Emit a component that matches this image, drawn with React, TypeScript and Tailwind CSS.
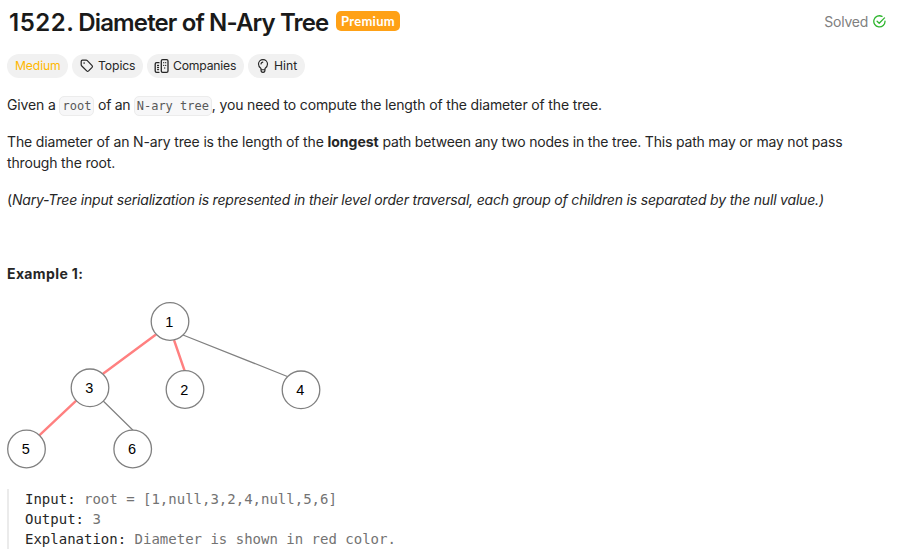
import type { ReactNode } from "react";

function Pill({ children, className }: { children: ReactNode; className: string }) {
  return (
    <div className={`flex h-6 shrink-0 items-center whitespace-nowrap rounded-full bg-[#f1f1f1] text-[12.2px] leading-4 ${className}`}>
      {children}
    </div>
  );
}

function Code({ children, className }: { children: ReactNode; className: string }) {
  return (
    <code className={`inline-block h-5 whitespace-pre rounded-[5px] border border-[#ececec] bg-[#f7f7f8] text-center align-middle font-['DejaVu_Sans_Mono',monospace] text-[12px] leading-[18px] tracking-normal text-[#595959] ${className}`}>
      {children}
    </code>
  );
}

function TagIcon() {
  return (
    <svg className="h-[14px] w-[14px]" viewBox="0 0 14 14" fill="none" stroke="currentColor" strokeWidth="1.2" strokeLinejoin="round">
      <path d="M1.2 2.4Q1.2 1.2 2.4 1.2H6.1Q6.8 1.2 7.3 1.7L12.1 6.6Q12.9 7.5 12.1 8.4L8.6 11.9Q7.6 12.7 6.7 11.9L1.8 7Q1.2 6.5 1.2 5.8Z" />
      <circle cx="4.1" cy="4.1" r="0.8" fill="currentColor" stroke="none" />
    </svg>
  );
}

function CompaniesIcon() {
  return (
    <svg className="h-[14px] w-[15px]" viewBox="0 0 15 14" fill="none" stroke="currentColor" strokeWidth="1.3" strokeLinecap="round" strokeLinejoin="round">
      <rect x="7.3" y="0.7" width="6.7" height="12.6" rx="1.4" />
      <path d="M5 3.7H2.6Q1.2 3.7 1.2 5.1V11.9Q1.2 13.3 2.6 13.3H5" />
      <path d="M9.7 3.6v.1M11.7 3.6v.1M9.7 6.3v.1M11.7 6.3v.1M10.7 9v.1M3.6 6.4h.9M3.6 8.5h.9M3.6 10.6h.9" />
    </svg>
  );
}

function BulbIcon() {
  return (
    <svg className="h-[14px] w-3" viewBox="0 0 12 14" fill="none" stroke="currentColor" strokeWidth="1.15" strokeLinecap="round" strokeLinejoin="round">
      <path d="M4 11V9.5C2.7 8.7 1.5 7.3 1.5 5.1A4.5 4.5 0 0 1 10.5 5.1C10.5 7.3 9.3 8.7 8 9.5V11Q8 13.3 6 13.3Q4 13.3 4 11ZM4 10.7H8M4 4.9Q4.2 3.3 5.8 3.1" />
    </svg>
  );
}

const nodes = [
  { label: "1", x: 163, y: 21.5 },
  { label: "3", x: 83, y: 87.8 },
  { label: "2", x: 178, y: 89.5 },
  { label: "4", x: 294, y: 89.8 },
  { label: "5", x: 19.5, y: 149 },
  { label: "6", x: 125.7, y: 149 },
];

function TreeDiagram() {
  return (
    <svg className="block h-[174px] w-[320px]" viewBox="0 0 320 174">
      <g stroke="#ff8080" strokeWidth="2.4">
        <path d="M149 34.5L96 73.8M167 40L177.7 71M69.5 100.3L32.3 135.3" />
      </g>
      <path d="M176 35L281 76.7M96.2 101L126 130.3" stroke="#808080" strokeWidth="1.2" />
      {nodes.map((node) => (
        <g key={node.label}>
          <circle cx={node.x} cy={node.y} r="18.8" fill="#fff" stroke="#808080" strokeWidth="1.3" />
          <text x={node.x - 0.7} y={node.y + 5.2} textAnchor="middle" className="font-['Liberation_Sans',Arial,sans-serif] text-[14.5px]" fill="#000">
            {node.label}
          </text>
        </g>
      ))}
    </svg>
  );
}

export default function App() {
  return (
    <main className="h-[551px] w-[898px] overflow-hidden bg-white pl-[7px] font-[Inter,sans-serif] text-[14px] leading-[21px] text-[#262626]">
      <header className="flex h-[46px] items-start pt-[7px] pr-3">
        <h1 className="flex w-[321px] gap-1 whitespace-nowrap pl-[2px] text-[24px] font-semibold leading-8 text-[#1a1a1a]">
          <span className="w-[66px] tracking-[0.5px]">1522.</span>
          <span className="tracking-[-0.87px]">Diameter of N-Ary Tree</span>
        </h1>
        <span className="mt-1 ml-2 flex h-5 w-16 shrink-0 items-center justify-center rounded-[5px] bg-[#ffa116] font-[Lato,sans-serif] text-[13px] font-bold tracking-[0.3px] text-white">
          Premium
        </span>
        <div className="mt-1 ml-auto flex items-center gap-[5px] text-[#808080]">
          <span className="tracking-[-0.25px]">Solved</span>
          <svg className="h-[13px] w-[13px]" viewBox="0 0 13 13" fill="none" stroke="#2db52d" strokeWidth="1.3" strokeLinecap="round" strokeLinejoin="round">
            <path d="M9 1.4A5.6 5.6 0 1 0 12 6.1M4.1 6.3L6.2 8.2L11.5 2.9" />
          </svg>
        </div>
      </header>
      <div className="mt-2 flex gap-1 text-[#262626]">
        <Pill className="w-[61px] pl-2 tracking-[-0.15px] text-[#ffb800]">Medium</Pill>
        <Pill className="w-[71px] gap-1 pl-2 tracking-[-0.1px]"><TagIcon />Topics</Pill>
        <Pill className="w-[97px] gap-1 pl-[7px] tracking-[-0.2px]"><CompaniesIcon />Companies</Pill>
        <Pill className="w-[57px] gap-[5px] pl-[9px]"><BulbIcon />Hint</Pill>
      </div>
      <p className="mt-4 h-[21px] whitespace-nowrap tracking-[-0.15px]">
        Given a <Code className="w-[35px]">root</Code><span className="tracking-[-0.3px]"> of an </span><Code className="w-[78px]">N-ary tree</Code>, you need to compute the length of the diameter of the tree.
      </p>
      <p className="mt-4 h-[42px] whitespace-nowrap tracking-[-0.157px]">
        The diameter of an N-ary tree is the length of the <strong className="font-bold tracking-[0px]">longest</strong><span className="tracking-[-0.187px]"> path between any two nodes in the tree. This path may or may not pass</span><br />through the root.
      </p>
      <p className="mt-4 whitespace-nowrap tracking-[-0.19px]">(<em>Nary-Tree input serialization is represented in their level order traversal, each group of children is separated by the null value.)</em></p>
      <p className="mt-[53px] font-bold tracking-[0.38px]">Example 1:</p>
      <div className="mt-4"><TreeDiagram /></div>
      <pre className="mt-[15px] h-[60px] border-l-2 border-[#ebebeb] pl-4 font-['DejaVu_Sans_Mono',monospace] text-[14px] leading-5 text-[#737373]">
        <span className="text-[#262626]">Input:</span>{" root = [1,null,3,2,4,null,5,6]\n"}
        <span className="text-[#262626]">Output:</span>{" 3\n"}
        <span className="text-[#262626]">Explanation:</span>{" Diameter is shown in red color."}
      </pre>
    </main>
  );
}
